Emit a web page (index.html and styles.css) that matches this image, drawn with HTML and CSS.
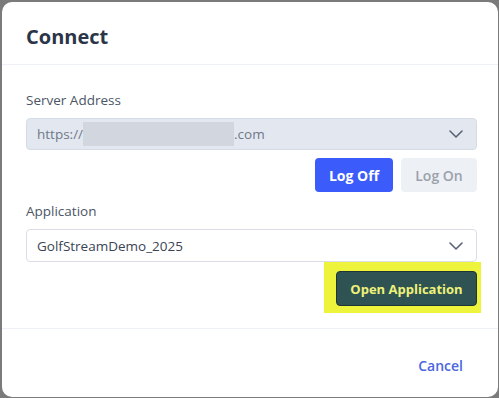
FILE: index.html
```html
<!DOCTYPE html>
<html lang="en">
<head>
  <meta charset="UTF-8">
  <title>Connect</title>
  <link rel="stylesheet" href="styles.css">
</head>
<body>
  <div class="dialog">
    <div class="dialog-header">
      <h1 class="title">Connect</h1>
    </div>

    <div class="dialog-body">
      <label class="label">Server Address</label>
      <div class="select select-disabled">
        <span class="value">https://<span class="redacted"></span>.com</span>
        <svg class="chevron" width="14" height="8" viewBox="0 0 14 8"><path d="M1 1l6 6 6-6" fill="none" stroke="#5a6474" stroke-width="1.6" stroke-linecap="round" stroke-linejoin="round"/></svg>
      </div>
      <div class="btn-row">
        <button class="btn btn-primary">Log Off</button>
        <button class="btn btn-muted">Log On</button>
      </div>

      <label class="label label-app">Application</label>
      <div class="select select-app">
        <span class="value value-dark">GolfStreamDemo_2025</span>
        <svg class="chevron" width="14" height="8" viewBox="0 0 14 8"><path d="M1 1l6 6 6-6" fill="none" stroke="#5a6474" stroke-width="1.6" stroke-linecap="round" stroke-linejoin="round"/></svg>
      </div>
      <div class="open-row">
        <div class="highlight">
          <button class="btn btn-open">Open Application</button>
        </div>
      </div>
    </div>

    <div class="dialog-footer">
      <button class="link">Cancel</button>
    </div>
  </div>
</body>
</html>
```

FILE: styles.css
```css
body {
  margin: 0;
  background: #7b7b7b;
  font-family: "Open Sans", "Noto Sans", sans-serif;
  height: 398px;
  overflow: hidden;
}
.dialog {
  margin: 2px 1px 0 2px;
  height: 395px;
  background: #fff;
  border-radius: 10px;
  display: flex;
  flex-direction: column;
}
.dialog-header {
  height: 63px;
  box-sizing: border-box;
  display: flex;
  align-items: center;
  padding: 6px 24px 0;
  border-bottom: 1px solid #edf0f5;
}
.title {
  margin: 0;
  font-size: 20px;
  font-weight: 700;
  color: #2b3547;
}
.dialog-body {
  padding: 25px 21px 0 24px;
  height: 238px;
  border-bottom: 1px solid #edf0f5;
}
.label {
  display: block;
  font-size: 13.5px;
  color: #4b5565;
  line-height: 20px;
  margin-bottom: 8px;
}
.label-app {
  margin-top: 9px;
  margin-bottom: 8px;
}
.select {
  height: 32px;
  box-sizing: border-box;
  border: 1px solid #d9dee6;
  border-radius: 4px;
  display: flex;
  align-items: center;
  justify-content: space-between;
  padding: 0 13px 0 10px;
  background: #fff;
}
.select-app {
  height: 33px;
}
.select-disabled {
  background: #e3e8f0;
  border-color: #d6dce6;
}
.value {
  font-size: 13.5px;
  color: #6f7888;
  display: flex;
  align-items: center;
}
.value-dark {
  color: #3a4454;
}
.redacted {
  display: inline-block;
  width: 151px;
  height: 24px;
  background: #d2d6de;
}
.chevron {
  display: block;
}
.btn-row {
  display: flex;
  justify-content: flex-end;
  gap: 8px;
  margin-top: 8px;
}
.btn {
  font-family: inherit;
  font-size: 14px;
  font-weight: 700;
  height: 34px;
  border: none;
  border-radius: 4px;
  padding: 0;
  white-space: nowrap;
  cursor: pointer;
}
.btn-primary {
  background: #3b5cfb;
  color: #fff;
  width: 78px;
}
.btn-muted {
  background: #edf0f4;
  color: #9ba1ab;
  font-weight: 600;
  width: 76px;
}
.open-row {
  display: flex;
  justify-content: flex-end;
  margin-right: -4px;
}
.highlight {
  background: #eef43c;
  padding: 9px 4px 7px 12px;
}
.btn-open {
  background: #2f5252;
  border: 1px solid #1e3535;
  color: #eef27a;
  height: 35px;
  width: 141px;
  font-size: 13px;
}
.dialog-footer {
  flex: 1;
  display: flex;
  justify-content: flex-end;
  align-items: center;
  padding: 4px 35px 0 0;
}
.link {
  background: none;
  border: none;
  font-family: inherit;
  font-size: 14px;
  font-weight: 600;
  color: #4a66e0;
  padding: 0;
  cursor: pointer;
}
```
